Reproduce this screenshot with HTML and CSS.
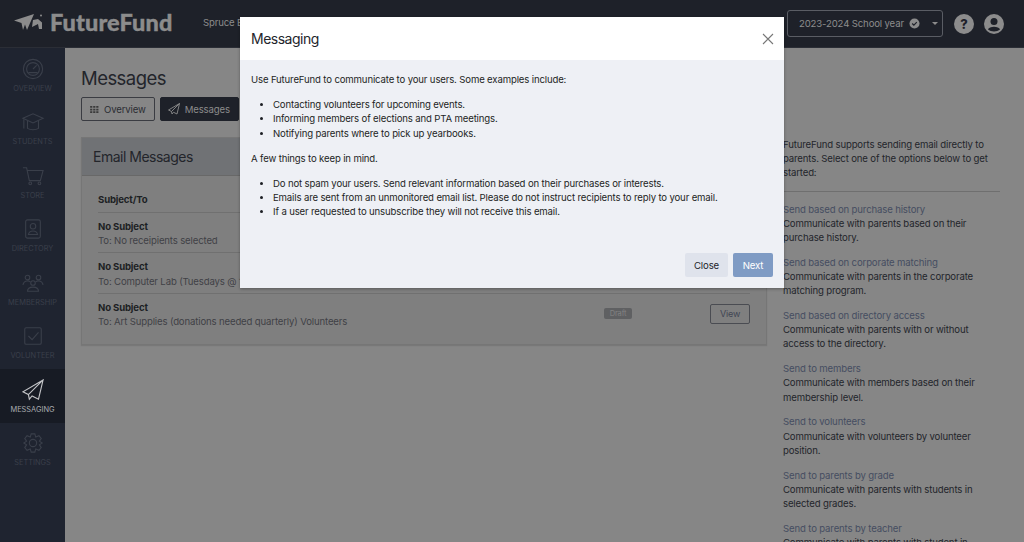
FILE: index.html
```html
<!DOCTYPE html>
<html lang="en">
<head>
<meta charset="utf-8">
<title>Messages</title>
<link rel="stylesheet" href="styles.css">
</head>
<body>
<header class="topbar">
  <div class="brand">
    <svg class="logo" viewBox="0 0 29 17" width="29" height="17"><path d="M0 6.500 L20 0 L13 16 L11 10.500 L9 16 L7.500 9 Z" fill="#8c8c8c"/><path d="M19 6 L24 5 L28 8.500 L28 15 L25 15 L24 10 L18 13 Z" fill="#8c8c8c"/><circle cx="27" cy="1.500" r="1" fill="#8c8c8c"/></svg>
    <span class="wordmark">FutureFund</span>
  </div>
  <span class="school">Spruce Elementary</span>
  <div class="top-right">
    <div class="year">
      <span class="year-label">2023-2024 School year</span>
      <svg viewBox="0 0 12 12" width="11" height="11"><circle cx="6" cy="6" r="5.500" fill="#8c8c8c"/><path d="M3.500 6 L5.300 7.800 L8.500 4.500" fill="none" stroke="#1e2129" stroke-width="1.300"/></svg>
      <i class="caret"></i>
    </div>
    <span class="help">?</span>
    <svg class="avatar" viewBox="0 0 20 20" width="20" height="20"><circle cx="10" cy="10" r="10" fill="#8c8c8c"/><circle cx="10" cy="7.500" r="3.500" fill="#1e2129"/><path d="M4 15.500 C5 11.800 15 11.800 16 15.500 C13 18 7 18 4 15.500 Z" fill="#1e2129"/></svg>
  </div>
</header>

<div class="shell">
  <nav class="sidebar">
    <a class="nav-item"><svg viewBox="0 0 24 24" width="22" height="22"><circle cx="12" cy="12" r="10.500"/><circle cx="12" cy="12" r="7"/><path d="M12 12 L16 8 M7 16 H17"/></svg>OVERVIEW</a>
    <a class="nav-item"><svg viewBox="0 0 24 24" width="24" height="22"><path d="M1 8 L12 3 L23 8 L12 13 Z"/><path d="M6 11 V19 C9 21 15 21 18 19 V11"/><path d="M2 9 V19"/></svg>STUDENTS</a>
    <a class="nav-item"><svg viewBox="0 0 24 24" width="24" height="22"><path d="M1 3 H5 L8 17 H20 L23 6 H6"/><circle cx="9" cy="20" r="1.500"/><circle cx="19" cy="20" r="1.500"/></svg>STORE</a>
    <a class="nav-item"><svg viewBox="0 0 24 24" width="22" height="22"><rect x="4" y="2" width="16" height="20" rx="2"/><circle cx="12" cy="9" r="3"/><path d="M7 18 C8 13 16 13 17 18 Z"/></svg>DIRECTORY</a>
    <a class="nav-item"><svg viewBox="0 0 24 24" width="26" height="22"><circle cx="6" cy="6" r="2.500"/><circle cx="18" cy="6" r="2.500"/><circle cx="12" cy="12" r="2.500"/><path d="M1 14 C2 9 8 9 9 11 M23 14 C22 9 16 9 15 11"/><path d="M6 21 C6 15 18 15 18 21 Z"/></svg>MEMBERSHIP</a>
    <a class="nav-item"><svg viewBox="0 0 24 24" width="22" height="22"><rect x="3" y="3" width="18" height="18" rx="1.500"/><path d="M7 12 L11 16 L18 8"/></svg>VOLUNTEER</a>
    <a class="nav-item active"><svg viewBox="0 0 24 24" width="22" height="22"><path d="M23 1 L1 14 L7 17 L23 1 L18 22 L11 18.500 L8 22 L7 17"/></svg>MESSAGING</a>
    <a class="nav-item"><svg viewBox="0 0 24 24" width="22" height="22"><circle cx="12" cy="12" r="4"/><path d="M10 2 H14 L15 5.500 L18.500 4 L21 7 L19 10 L22 12 L19 14 L21 17 L18.500 20 L15 18.500 L14 22 H10 L9 18.500 L5.500 20 L3 17 L5 14 L2 12 L5 10 L3 7 L5.500 4 L9 5.500 Z"/></svg>SETTINGS</a>
  </nav>

  <main class="main">
    <section class="content">
      <h1 class="page-title">Messages</h1>
      <div class="tabs">
        <a class="tab"><svg viewBox="0 0 10 8" width="9" height="7"><path d="M0 1 H10 M0 4 H10 M0 7 H10" stroke="#3a3a3a" stroke-width="2" stroke-dasharray="2.500 1"/></svg>Overview</a>
        <a class="tab tab-active"><svg viewBox="0 0 24 24" width="12" height="12"><path d="M23 1 L1 14 L7 17 L23 1 L18 22 L11 18.500 L8 22 L7 17" fill="none" stroke="#8c8c8c" stroke-width="1.800"/></svg>Messages</a>
      </div>
      <div class="card">
        <h2 class="card-title">Email Messages</h2>
        <div class="card-body">
          <div class="row head">Subject/To</div>
          <div class="row">
            <div class="cell"><b>No Subject</b><span>To: No receipients selected</span></div>
          </div>
          <div class="row">
            <div class="cell"><b>No Subject</b><span>To: Computer Lab (Tuesdays @ 1:00pm) Volunteers</span></div>
          </div>
          <div class="row last">
            <div class="cell"><b>No Subject</b><span>To: Art Supplies (donations needed quarterly) Volunteers</span></div>
            <span class="badge">Draft</span>
            <a class="view">View</a>
          </div>
        </div>
      </div>
    </section>

    <aside class="aside">
      <p class="intro">FutureFund supports sending email directly to parents. Select one of the options below to get started:</p>
      <hr class="rule">
      <div class="opt"><a>Send based on purchase history</a><p>Communicate with parents based on their purchase history.</p></div>
      <div class="opt"><a>Send based on corporate matching</a><p>Communicate with parents in the corporate matching program.</p></div>
      <div class="opt"><a>Send based on directory access</a><p>Communicate with parents with or without access to the directory.</p></div>
      <div class="opt"><a>Send to members</a><p>Communicate with members based on their membership level.</p></div>
      <div class="opt"><a>Send to volunteers</a><p>Communicate with volunteers by volunteer position.</p></div>
      <div class="opt"><a>Send to parents by grade</a><p>Communicate with parents with students in selected grades.</p></div>
      <div class="opt"><a>Send to parents by teacher</a><p>Communicate with parents with student in selected classrooms.</p></div>
    </aside>
  </main>
</div>

<div class="modal">
  <div class="modal-head">
    <h3>Messaging</h3>
    <svg class="close-x" viewBox="0 0 12 12" width="12" height="12"><path d="M1 1 L11 11 M11 1 L1 11" stroke="#777" stroke-width="1.100"/></svg>
  </div>
  <div class="modal-body">
    <p>Use FutureFund to communicate to your users. Some examples include:</p>
    <ul>
      <li>Contacting volunteers for upcoming events.</li>
      <li>Informing members of elections and PTA meetings.</li>
      <li>Notifying parents where to pick up yearbooks.</li>
    </ul>
    <p>A few things to keep in mind.</p>
    <ul>
      <li>Do not spam your users. Send relevant information based on their purchases or interests.</li>
      <li>Emails are sent from an unmonitored email list. Please do not instruct recipients to reply to your email.</li>
      <li>If a user requested to unsubscribe they will not receive this email.</li>
    </ul>
  </div>
  <div class="modal-foot">
    <a class="btn btn-light">Close</a>
    <a class="btn btn-blue">Next</a>
  </div>
</div>
</body>
</html>
```
FILE: styles.css
```css
* { box-sizing: border-box; }
html, body { margin: 0; height: 542px; overflow: hidden; }
body { font-family: Inter, "Liberation Sans", sans-serif; font-size: 9.600px; letter-spacing: -.15px; color: #1d1f24; background: #868686; position: relative; }
p, h1, h2, h3, ul { margin: 0; padding: 0; }

.topbar { height: 48px; background: #1e2129; display: flex; align-items: center; padding-left: 14px; border-bottom: 1px solid #2b2e36; }
.brand { display: flex; align-items: center; gap: 7px; width: 189px; margin-top: -3px; }
.wordmark { font-family: Lato, sans-serif; font-weight: 900; font-size: 23.500px; color: #8c8c8c; letter-spacing: .1px; -webkit-text-stroke: .4px #8c8c8c; }
.school { color: #8c8c8c; white-space: nowrap; margin-top: -2px; }
.top-right { margin-left: auto; display: flex; align-items: center; padding-right: 20px; }
.year { width: 156px; height: 27px; border: 1px solid #5a5d64; border-radius: 3px; display: flex; align-items: center; padding-left: 11px; gap: 5px; color: #8c8c8c; margin-right: 11px; }
.year-label { white-space: nowrap; }
.caret { margin-left: 7px; border: 3px solid transparent; border-top-color: #8c8c8c; border-bottom: 0; }
.help { width: 20px; height: 20px; border-radius: 50%; background: #8c8c8c; color: #1e2129; font-weight: 800; font-size: 13px; display: flex; align-items: center; justify-content: center; margin-right: 10px; }

.shell { display: flex; height: 494px; }
.sidebar { width: 65px; flex: none; background: #1f2430; }
.nav-item { height: 53.500px; display: flex; flex-direction: column; align-items: center; justify-content: flex-end; padding-bottom: 9px; gap: 4px; font-size: 7.400px; letter-spacing: 0; color: #3a3f4a; }
.nav-item svg { fill: none; stroke: #3a3f4a; stroke-width: 1.200; }
.nav-item.active { background: #171b24; color: #a9abb0; }
.nav-item.active svg { stroke: #c4c5c8; }

.main { flex: 1; display: flex; min-width: 0; padding-left: 16px; }
.content { width: 686px; flex: none; padding-top: 18px; }
.page-title { font-size: 18.500px; letter-spacing: -.55px; font-weight: 400; line-height: 24px; color: #23252b; margin-bottom: 7px; }
.tabs { display: flex; gap: 5px; margin-bottom: 16px; }
.tab { height: 24px; display: flex; align-items: center; gap: 5px; padding: 0 8px; border: 1px solid #3a3c42; border-radius: 2px; color: #2b2d33; }
.tab-active { background: #1e2129; color: #8c8c8c; border-color: #1e2129; padding: 0 8px 0 7px; }

.card { background: #7f7f7f; border: 1px solid #767676; box-shadow: 0 1px 1px #787878; height: 208px; }
.card-title { height: 38px; background: #707275; border-bottom: 1px solid #686868; font-size: 14px; letter-spacing: -.5px; font-weight: 400; line-height: 37px; padding-left: 11px; color: #23252b; }
.card-body { padding: 10px 16px 0; }
.row { display: flex; align-items: center; height: 40.300px; border-bottom: 1px solid #707070; }
.row.last { border-bottom: 0; }
.row.head { height: 27px; font-weight: 700; color: #1d1f24; }
.cell { flex: 1; display: flex; flex-direction: column; gap: 2.500px; line-height: 12px; padding-top: 3px; }
.cell b { font-weight: 700; color: #1d1f24; }
.cell span { color: #3f4146; }
.badge { background: #5f6062; color: #828282; border-radius: 2px; font-size: 7.500px; height: 11px; line-height: 11px; width: 28px; text-align: center; margin-right: 78px; }
.view { width: 40px; height: 20px; border: 1px solid #4a4c52; border-radius: 2px; color: #3f4553; font-size: 9px; display: flex; align-items: center; justify-content: center; }

.aside { width: 217px; margin-left: 16px; padding-top: 90px; line-height: 14.200px; color: #23252b; flex: none; }
.rule { border: 0; border-top: 1px solid #6f6f6f; margin: 10px 0 11px; }
.opt { margin-bottom: 10.600px; }
.opt a { display: block; color: #454d61; }

.modal { position: absolute; left: 240px; top: 17px; width: 544px; height: 271px; background: #eef0f5; display: flex; flex-direction: column; box-shadow: 0 1px 3px rgba(0,0,0,.3); }
.modal-head { height: 43px; background: #fff; display: flex; align-items: center; justify-content: space-between; padding: 0 10px 0 11px; flex: none; }
.modal-head h3 { font-size: 14px; letter-spacing: -.5px; font-weight: 400; color: #23252b; }
.modal-body { padding: 13px 11px 0; flex: 1; line-height: 14.400px; }
.modal-body p { margin-bottom: 10.500px; }
.modal-body ul { padding-left: 22px; margin-bottom: 10.500px; }
.modal-foot { display: flex; justify-content: flex-end; gap: 5px; padding: 0 11px 11px; }
.btn { height: 24px; display: flex; align-items: center; justify-content: center; border-radius: 2px; }
.btn-light { width: 43px; background: #dfe3ec; color: #23252b; }
.btn-blue { width: 40px; background: #7f9bc4; color: #fff; }
```
